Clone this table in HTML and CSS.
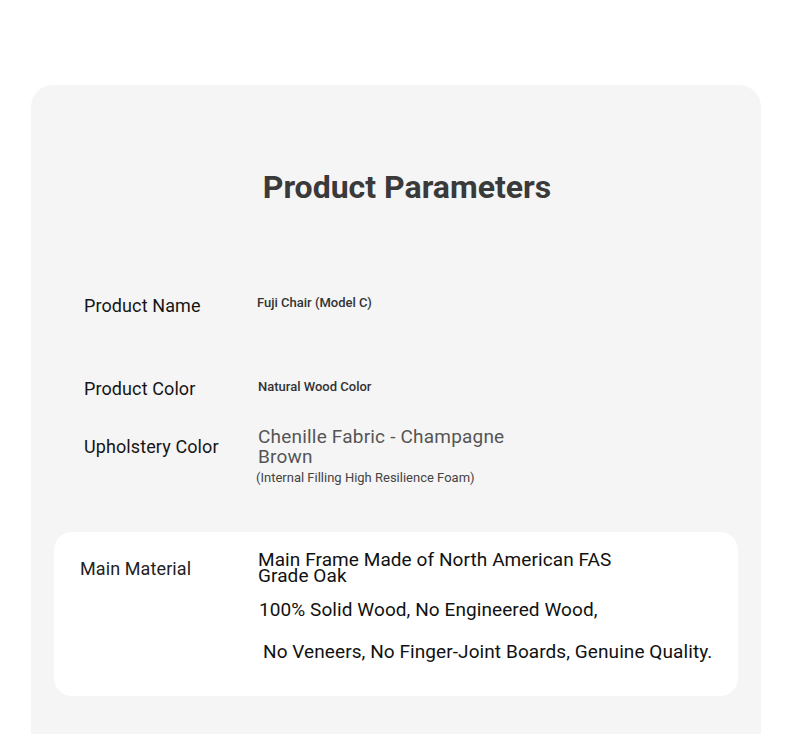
FILE: index.html
```html
<!DOCTYPE html>
<html>
<head>
<meta charset="utf-8">
<link rel="stylesheet" href="styles.css">
</head>
<body>
<div class="page">
  <section class="card">
    <h1 class="title">Product Parameters</h1>
    <div class="rows">
      <div class="row row-name">
        <div class="label">Product Name</div>
        <div class="value small">Fuji Chair (Model C)</div>
      </div>
      <div class="row row-color">
        <div class="label">Product Color</div>
        <div class="value small">Natural Wood Color</div>
      </div>
      <div class="row row-uph">
        <div class="label">Upholstery Color</div>
        <div class="value">
          <div class="big-grey">Chenille Fabric - Champagne Brown</div>
          <div class="note">(Internal Filling High Resilience Foam)</div>
        </div>
      </div>
    </div>
    <div class="material">
      <div class="m-label">Main Material</div>
      <div class="m-values">
        <div class="m-line1">Main Frame Made of North American FAS Grade Oak</div>
        <div class="m-line2">100% Solid Wood, No Engineered Wood,</div>
        <div class="m-line3">No Veneers, No Finger-Joint Boards, Genuine Quality.</div>
      </div>
    </div>
  </section>
</div>
</body>
</html>
```

FILE: styles.css
```css
* { box-sizing: border-box; }
html, body { margin: 0; padding: 0; background: #ffffff; }
body { font-family: Roboto, "Liberation Sans", sans-serif; color: #222; }
.page { padding: 85px 29px 0 31px; height: 734px; overflow: hidden; }
.card {
  background: #f5f5f5;
  border-radius: 22px 22px 0 0;
  height: 700px;
  padding: 0 23px;
}
.title {
  margin: 0;
  padding-top: 84px;
  text-align: center;
  font-size: 32px;
  line-height: 36px;
  font-weight: 700;
  color: #3a3a3a;
  padding-left: 22px;
}
.rows { padding-top: 90px; }
.row { display: flex; align-items: flex-start; }
.label { width: 203px; padding-left: 30px; font-size: 18px; line-height: 22px; color: #151515; font-weight: 400; letter-spacing: 0.1px; }
.value { flex: 1; }
.small { font-size: 13px; font-weight: 500; line-height: 18px; color: #333; }
.row-name .small { margin-left: 0; margin-top: -1px; }
.row-color .small { margin-left: 1px; }
.row-color { margin-top: 61px; }
.row-uph { margin-top: 27px; }
.row-uph .label { padding-top: 9px; }
.big-grey { font-size: 19px; line-height: 20px; color: #555; width: 262px; margin-left: 1px; letter-spacing: 0.2px; }
.note { font-size: 13px; line-height: 18px; color: #444; margin-left: -1px; margin-top: 2px; }
.material {
  margin-top: 45px;
  background: #ffffff;
  border-radius: 18px;
  height: 164px;
  display: flex;
  padding: 17px 0 0 0;
}
.m-label { width: 204px; padding-left: 26px; padding-top: 9px; font-size: 18px; line-height: 22px; color: #222; letter-spacing: 0.1px; }
.m-values { flex: 1; font-size: 19px; color: #111; letter-spacing: 0.08px; }
.m-line1 { line-height: 16px; width: 362px; margin-top: 3px; }
.m-line2 { margin-top: 15px; margin-left: 1px; line-height: 22px; }
.m-line3 { margin-top: 20px; margin-left: 5px; line-height: 22px; }
```
